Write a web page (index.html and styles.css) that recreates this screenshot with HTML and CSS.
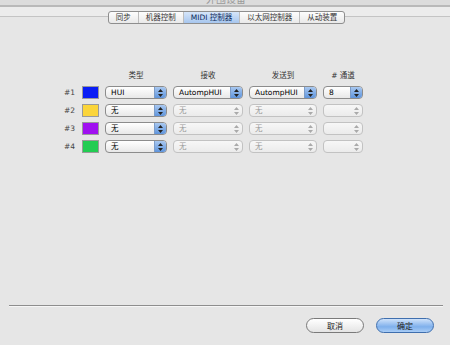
FILE: index.html
```html
<!DOCTYPE html>
<html lang="zh">
<head>
    <meta charset="UTF-8">
    <link rel="stylesheet" href="styles.css">
    <title>外围设备</title>
</head>
<body>
    <div class="window">
        <div class="title">外围设备</div>
        <div class="title-rule"></div>

        <!-- Tab strip -->
        <div class="tabbar">
            <div class="tabs">
                <span class="tab">同步</span>
                <span class="tab">机器控制</span>
                <span class="tab selected">MIDI 控制器</span>
                <span class="tab">以太网控制器</span>
                <span class="tab">从动装置</span>
            </div>
        </div>

        <div class="content">
            <div class="grid">
                <span></span>
                <span></span>
                <span class="head">类型</span>
                <span class="head">接收</span>
                <span class="head">发送到</span>
                <span class="head"># 通道</span>

                <span class="num">#1</span>
                <span class="swatch blue"></span>
                <div class="popup"><span class="val">HUI</span><span class="arrows"></span></div>
                <div class="popup"><span class="val">AutompHUI</span><span class="arrows"></span></div>
                <div class="popup"><span class="val">AutompHUI</span><span class="arrows"></span></div>
                <div class="popup"><span class="val">8</span><span class="arrows"></span></div>

                <span class="num">#2</span>
                <span class="swatch yellow"></span>
                <div class="popup"><span class="val">无</span><span class="arrows"></span></div>
                <div class="popup off"><span class="val">无</span><span class="arrows"></span></div>
                <div class="popup off"><span class="val">无</span><span class="arrows"></span></div>
                <div class="popup off"><span class="val"></span><span class="arrows"></span></div>

                <span class="num">#3</span>
                <span class="swatch purple"></span>
                <div class="popup"><span class="val">无</span><span class="arrows"></span></div>
                <div class="popup off"><span class="val">无</span><span class="arrows"></span></div>
                <div class="popup off"><span class="val">无</span><span class="arrows"></span></div>
                <div class="popup off"><span class="val"></span><span class="arrows"></span></div>

                <span class="num">#4</span>
                <span class="swatch green"></span>
                <div class="popup"><span class="val">无</span><span class="arrows"></span></div>
                <div class="popup off"><span class="val">无</span><span class="arrows"></span></div>
                <div class="popup off"><span class="val">无</span><span class="arrows"></span></div>
                <div class="popup off"><span class="val"></span><span class="arrows"></span></div>
            </div>
        </div>

        <div class="footer">
            <div class="separator"></div>
            <div class="buttons">
                <button class="btn">取消</button>
                <button class="btn default">确定</button>
            </div>
        </div>
    </div>
</body>
</html>
```

FILE: styles.css
```css
body {
  margin: 0;
  font-family: "DejaVu Sans", "Noto Sans CJK SC", sans-serif;
  font-size: 7.5px;
  color: #222;
  background-color: #e6e6e6;
}

.window {
  width: 450px;
  height: 345px;
  display: flex;
  flex-direction: column;
  overflow: hidden;
}

.title {
  height: 5px;
  overflow: hidden;
  background-color: #dcdcdc;
  color: #9a9a9a;
  text-align: center;
  font-size: 10px;
  line-height: 0px;
  padding-left: 2px;
}

.title-rule {
  height: 2px;
  background-color: #b9b9b9;
}

.tabbar {
  display: flex;
  justify-content: center;
  padding-top: 4px;
  padding-left: 3px;
  background: linear-gradient(#ececec 0 9px, #c4c4c4 9px 10px, #e6e6e6 10px);
}

.tabs {
  display: flex;
  height: 11px;
  border: 1px solid #8e8e8e;
  border-radius: 3px;
  background: linear-gradient(#fdfdfd, #e9e9e9);
  overflow: hidden;
}

.tab {
  padding: 0 7px;
  line-height: 11px;
  color: #333;
  border-left: 1px solid #bdbdbd;
}

.tab:first-child {
  border-left: none;
}

.tab.selected {
  background: linear-gradient(#d6e6fa, #a7c6ee);
  color: #0c2a5a;
}

.content {
  flex: 1;
}

.grid {
  display: grid;
  grid-template-columns: 16px 17px 62px 70px 68px 40px;
  grid-template-rows: 10px 13px 13px 13px 13px;
  column-gap: 6px;
  row-gap: 5px;
  margin: 47px 0 0 60px;
  align-items: center;
}

.head {
  text-align: center;
  color: #333;
  line-height: 10px;
}

.num {
  text-align: right;
  color: #444;
  padding-right: 1px;
}

.swatch {
  height: 11px;
  border: 1px solid #9a9a9a;
}

.blue { background-color: #0a1df5; }
.yellow { background-color: #fbd53a; }
.purple { background-color: #a010f0; }
.green { background-color: #22cc52; }

.popup {
  display: flex;
  height: 11px;
  border: 1px solid #8c8c8c;
  border-radius: 4px;
  background: linear-gradient(#ffffff, #e8e8e8);
  overflow: hidden;
}

.val {
  flex: 1;
  padding-left: 5px;
  line-height: 11px;
  color: #000;
  white-space: nowrap;
  overflow: hidden;
}

.arrows {
  width: 11px;
  border-left: 1px solid #7c9cc8;
  background:
    url("data:image/svg+xml,%3Csvg xmlns='http://www.w3.org/2000/svg' width='5' height='8'%3E%3Cpath d='M2.5 0L5 3H0z M2.5 8L5 5H0z' fill='%23222'/%3E%3C/svg%3E") center no-repeat,
    linear-gradient(#a9c8f0, #5f95dd);
}

.popup.off {
  border-color: #c2c2c2;
  background: linear-gradient(#f7f7f7, #ebebeb);
}

.popup.off .val {
  color: #999;
}

.popup.off .arrows {
  border-left: none;
  background:
    url("data:image/svg+xml,%3Csvg xmlns='http://www.w3.org/2000/svg' width='5' height='8'%3E%3Cpath d='M2.5 0L5 3H0z M2.5 8L5 5H0z' fill='%23aaa'/%3E%3C/svg%3E") center no-repeat;
}

.footer {
  height: 40px;
}

.separator {
  height: 1px;
  margin: 0 7px 0 9px;
  background-color: #8e8e8e;
  border-bottom: 1px solid #f6f6f6;
}

.buttons {
  display: flex;
  justify-content: flex-end;
  gap: 12px;
  margin-top: 11px;
  padding-right: 16px;
}

.btn {
  width: 58px;
  height: 15px;
  padding: 0;
  font-family: "Noto Sans CJK SC", sans-serif;
  font-size: 8px;
  line-height: 13px;
  color: #222;
  border: 1px solid #7a7a7a;
  border-radius: 8px;
  background: linear-gradient(#ffffff, #e4e4e4);
}

.btn.default {
  border-color: #3f6fae;
  background: linear-gradient(#cfe2fa, #7fb0ec 60%, #a9cdf6);
}
```
